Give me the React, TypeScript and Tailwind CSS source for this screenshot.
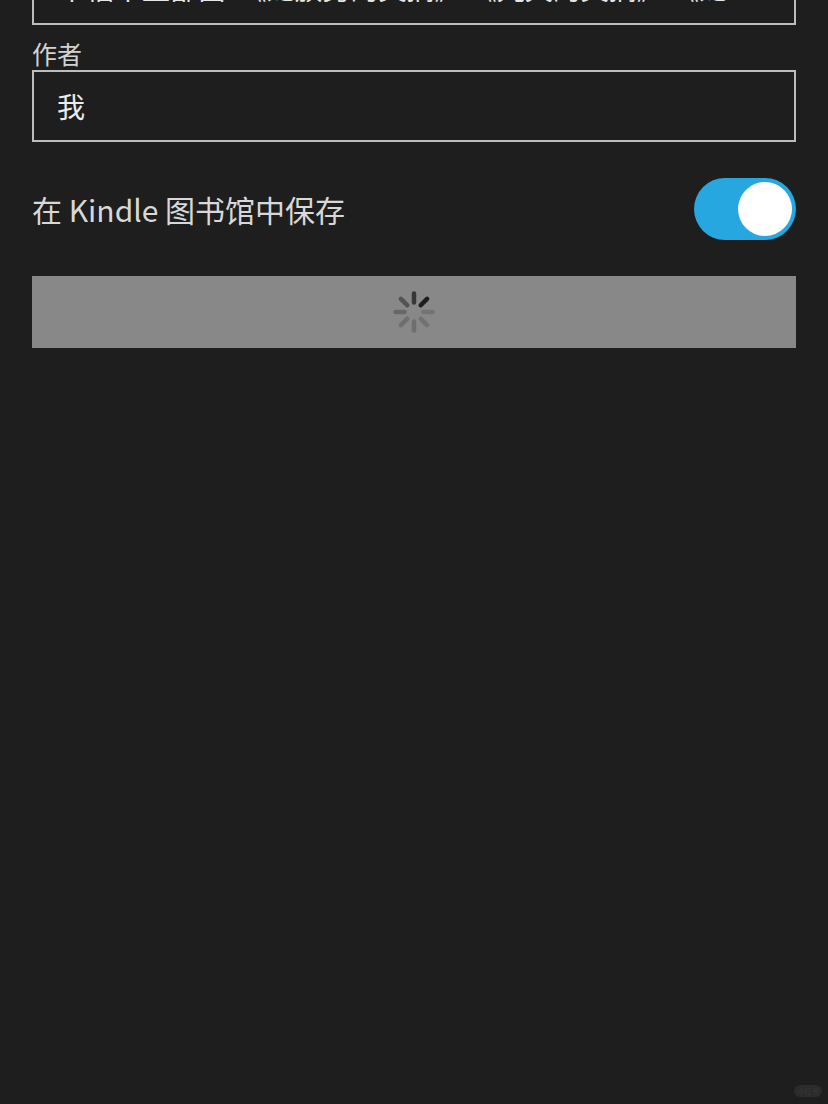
const spokes = [
    { angle: 45, color: '#1d1d1d' },
    { angle: 0, color: '#383838' },
    { angle: 315, color: '#535353' },
    { angle: 270, color: '#686868' },
    { angle: 225, color: '#6e6e6e' },
    { angle: 180, color: '#6e6e6e' },
    { angle: 135, color: '#727272' },
    { angle: 90, color: '#747474' },
];

function Spinner() {
    return (
        <svg width="44" height="44" viewBox="0 0 44 44">
            {spokes.map((s) => (
                <line
                    key={s.angle}
                    x1="22"
                    y1="3.5"
                    x2="22"
                    y2="12.5"
                    stroke={s.color}
                    strokeWidth="4.5"
                    strokeLinecap="round"
                    transform={`rotate(${s.angle} 22 22)`}
                />
            ))}
        </svg>
    );
}

export default function App() {
    return (
        <main
            className="relative min-h-[1104px] overflow-hidden bg-[#1e1e1e] px-8 text-[#dcdcdc]"
            style={{ fontFamily: '"Noto Sans CJK SC", "Noto Sans", sans-serif' }}
        >
            <div className="-mt-[46px] flex h-[71px] items-center border-2 border-[#bdbdbd] px-6">
                <p className="translate-y-[-2px] overflow-hidden text-ellipsis whitespace-nowrap text-[28px] leading-none text-[#e6e6e6]">
                    中稻中亚部面 &nbsp;《龙族男的文摘》&nbsp;《九天的文摘》&nbsp;《龙族男的文摘》
                </p>
            </div>

            <label className="mt-[11px] block text-[25px] leading-[34px] text-[#d2d2d2]">作者</label>
            <div className="flex h-[72px] items-center border-2 border-[#bdbdbd] pl-[23px]">
                <span className="text-[28px] leading-none text-[#ececec]">我</span>
            </div>

            <div className="mt-[36px] flex h-[62px] items-center justify-between">
                <span className="text-[30px] leading-none text-[#d8d8d8]">在 Kindle 图书馆中保存</span>
                <div className="flex h-[62px] w-[102px] items-center justify-end rounded-full bg-[#27a7df] pr-1">
                    <div className="h-[54px] w-[54px] rounded-full bg-white" />
                </div>
            </div>

            <button className="mt-[36px] flex h-[72px] w-full items-center justify-center bg-[#888888]">
                <Spinner />
            </button>

            <div className="absolute bottom-[7px] right-[6px] flex h-[12px] w-[28px] items-center justify-center rounded-full bg-[#2b2b2b]">
                <span className="text-[7px] leading-none text-[#3a3a3a]">小红书</span>
            </div>
        </main>
    );
}
